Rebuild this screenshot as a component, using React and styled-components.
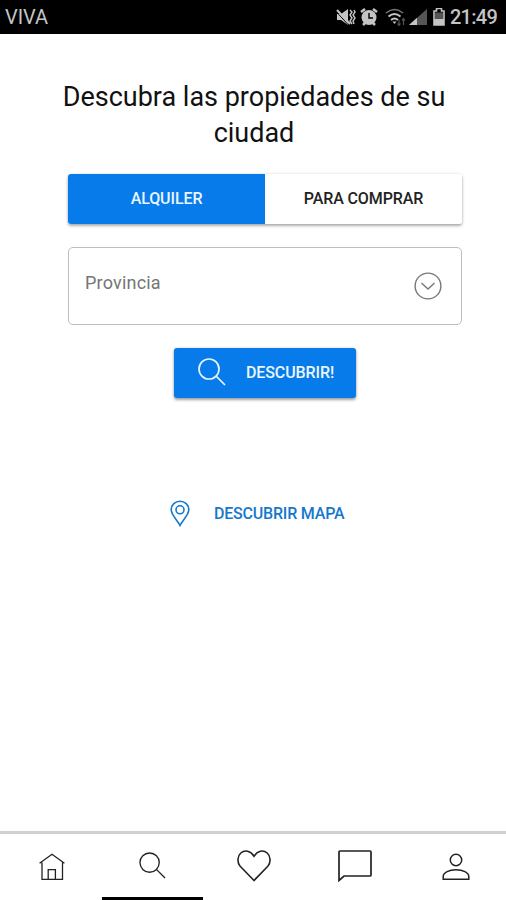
import React from 'react';
import styled, { createGlobalStyle, ThemeProvider } from 'styled-components';

const theme = {
    colors: {
        primary: '#077bea',
        link: '#1478cc',
        text: '#111',
        muted: '#757575',
        border: '#bdbdbd',
        status: '#c4c4c4',
    },
}

const GlobalStyle = createGlobalStyle`
    * {
        box-sizing: border-box;
    }
    body {
        margin: 0;
        background: #fff;
        font-family: Roboto, sans-serif;
    }
    svg {
        display: block;
        flex-shrink: 0;
    }
`

const Screen = styled.div`
    display: flex;
    flex-direction: column;
    width: 506px;
    height: 900px;
    overflow: hidden;
    background: #fff;
`

const StatusBar = styled.header`
    display: flex;
    align-items: center;
    justify-content: space-between;
    height: 34px;
    padding: 0 9px 0 5px;
    background: #000;
    color: ${({ theme }) => theme.colors.status};
`

const Carrier = styled.span`
    font-size: 20px;
    line-height: 34px;
    letter-spacing: -0.1px;
`

const StatusIcons = styled.div`
    display: flex;
    align-items: center;
`

const Clock = styled.span`
    margin-left: 5px;
    font-size: 20px;
    font-weight: 500;
    line-height: 34px;
    letter-spacing: -0.75px;
`

const Content = styled.main`
    display: flex;
    flex: 1;
    flex-direction: column;
    align-items: center;
    padding: 45px 44px 0 68px;
`

const Title = styled.h1`
    width: 394px;
    margin: 0 22px 0 0;
    font-size: 27px;
    font-weight: 400;
    line-height: 36px;
    text-align: center;
    color: ${({ theme }) => theme.colors.text};
`

const Segments = styled.div`
    display: flex;
    width: 394px;
    height: 50px;
    margin-top: 23px;
    border-radius: 3px;
    box-shadow: 0 2px 3px rgba(0, 0, 0, 0.3), 0 0 3px rgba(0, 0, 0, 0.12);
`

const Segment = styled.button`
    flex: 1;
    padding: 0 0 2px;
    border: 0;
    border-radius: ${props => props.$active ? '3px 0 0 3px' : '0 3px 3px 0'};
    background: ${props => props.$active ? props.theme.colors.primary : '#fff'};
    color: ${props => props.$active ? '#e9f6ff' : '#222'};
    font-family: inherit;
    font-size: 16px;
    font-weight: 500;
    letter-spacing: -0.1px;
`

const Select = styled.div`
    display: flex;
    align-items: center;
    justify-content: space-between;
    width: 394px;
    height: 78px;
    margin-top: 23px;
    padding: 0 19px 1px 16px;
    border: 1.5px solid ${({ theme }) => theme.colors.border};
    border-radius: 5px;
`

const Placeholder = styled.span`
    padding-bottom: 6px;
    font-size: 18px;
    letter-spacing: 0.2px;
    color: ${({ theme }) => theme.colors.muted};
`

const SubmitButton = styled.button`
    display: flex;
    align-items: center;
    width: 182px;
    height: 50px;
    margin-top: 23px;
    padding: 0 0 2px 24px;
    gap: 20px;
    border: 0;
    border-radius: 3px;
    background: ${({ theme }) => theme.colors.primary};
    box-shadow: 0 2px 3px rgba(0, 0, 0, 0.35), 0 0 3px rgba(0, 0, 0, 0.15);
    color: #e9f6ff;
    font-family: inherit;
    font-size: 16px;
    font-weight: 500;
    letter-spacing: -0.1px;
    white-space: nowrap;
`

const MapLink = styled.a`
    display: flex;
    align-items: center;
    width: 190px;
    height: 30px;
    margin-top: 100px;
    gap: 24px;
    font-size: 16px;
    font-weight: 500;
    letter-spacing: -0.2px;
    white-space: nowrap;
    color: ${({ theme }) => theme.colors.link};
`

const TabBar = styled.nav`
    display: flex;
    height: 69px;
    padding-left: 1px;
    border-top: 3px solid #d0d0d0;
`

const Tab = styled.a`
    display: flex;
    flex: 1;
    justify-content: center;
    padding-top: ${props => props.$top}px;
    border-bottom: 3px solid ${props => props.$active ? '#000' : 'transparent'};
    color: #222;
`

const Icon = ({ width, height, stroke = 1.4, children, ...rest }) => (
    <svg
        width={width}
        height={height}
        viewBox={`0 0 ${width} ${height}`}
        fill="none"
        stroke="currentColor"
        strokeWidth={stroke}
        {...rest}
    >
        {children}
    </svg>
)

const StatusIcon = styled(Icon)`
    margin-left: ${props => props.$left || 0}px;
`

const SearchIcon = (props) => (
    <Icon width={28} height={28} {...props}>
        <circle cx="11" cy="11" r="10" />
        <path d="M18 18l9 9" />
    </Icon>
)

const tabs = [
    {
        name: 'home',
        top: 19,
        icon: (
            <Icon width={26} height={28} stroke={1.3}>
                <path d="M.6 10.2L13 1.2l12.4 9M3 9.5v16.8h20.5V9.5M9.2 26V16.7h7.2V26" />
            </Icon>
        ),
    },
    {
        name: 'search',
        top: 18,
        active: true,
        icon: <SearchIcon width={27} height={27} stroke={1.4} viewBox="0 0 28 28" />,
    },
    {
        name: 'favorites',
        top: 16,
        icon: (
            <Icon width={34} height={32} stroke={1.6}>
                <path d="M17 30.5L3.2 16.2C-.2 12.4.4 6 3.8 3 8-.5 13.5.8 17 6.2 20.5.8 26-.5 30.2 3c3.4 3 4 9.4.6 13.2z" />
            </Icon>
        ),
    },
    {
        name: 'messages',
        top: 16,
        icon: (
            <Icon width={34} height={32} stroke={1.7}>
                <path d="M1 30.500V2q0-1 1-1h30q1 0 1 1v23q0 1-1 1H6z" />
            </Icon>
        ),
    },
    {
        name: 'profile',
        top: 19,
        icon: (
            <Icon width={28} height={28} stroke={1.5}>
                <circle cx="14" cy="7" r="5.7" />
                <path d="M1.2 26.2v-2.7c0-4 6-6.8 12.8-6.8s12.8 2.8 12.8 6.8v2.7z" />
            </Icon>
        ),
    },
]

export default function App() {
    return (
        <ThemeProvider theme={theme}>
            <GlobalStyle />
            <Screen>
                <StatusBar>
                    <Carrier>VIVA</Carrier>
                    <StatusIcons>
                        <StatusIcon width={20} height={18}>
                            <path d="M1 6h4l7-5v16l-7-5H1z" fill="currentColor" stroke="none" />
                            <path d="M0 3.500l13 14" stroke="#000" strokeWidth="1" />
                            <path d="M1 2l13 14" strokeWidth="2" />
                            <path d="M14 2l2 2-2 3 2 3-2 3 2 3M18 2l1 2-2 3 2 3-2 3 1 3" />
                        </StatusIcon>
                        <StatusIcon width={18} height={18} $left={4}>
                            <circle cx="9" cy="9.5" r="7.5" fill="currentColor" stroke="none" />
                            <path d="M1 4l4-3M17 4l-4-3M3 17l3-3M15 17l-3-3" strokeWidth="2.5" />
                            <path d="M9 5v5h4" stroke="#000" />
                        </StatusIcon>
                        <StatusIcon width={21} height={18} $left={7}>
                            <path d="M1 5q8.5-7 17 0" stroke="#777" strokeWidth="1.6" />
                            <path d="M3.5 8.5q6-5 12 0M6 12q3.5-3 7 0" strokeWidth="2" />
                            <path d="M7.5 13.5h4l-2 2.5z" fill="currentColor" stroke="none" />
                            <path d="M14 12v5M12.5 15.5l1.5 2 1.5-2M18.5 17v-6M17 12.5l1.5-2 1.5 2" stroke="#555" strokeWidth="1.2" />
                        </StatusIcon>
                        <StatusIcon width={18} height={18} $left={3}>
                            <path d="M0 17L18 1v16z" fill="#555" stroke="none" />
                            <path d="M0 17l8-7.2V17z" fill="currentColor" stroke="none" />
                        </StatusIcon>
                        <StatusIcon width={12} height={18} $left={6}>
                            <path d="M1 3h2.5V.5h5V3H11v14H1z" strokeWidth="1.6" />
                            <path d="M2 4.500h8V11H2z" fill="#555" stroke="none" />
                            <path d="M1 11h10v6H1z" fill="currentColor" stroke="none" />
                        </StatusIcon>
                        <Clock>21:49</Clock>
                    </StatusIcons>
                </StatusBar>
                <Content>
                    <Title>Descubra las propiedades de su ciudad</Title>
                    <Segments>
                        <Segment $active>ALQUILER</Segment>
                        <Segment>PARA COMPRAR</Segment>
                    </Segments>
                    <Select>
                        <Placeholder>Provincia</Placeholder>
                        <Icon width={28} height={28} stroke={1.4} color="#777">
                            <circle cx="14" cy="14" r="12.9" />
                            <path d="M7.500 11l6.500 6 6.500-6" />
                        </Icon>
                    </Select>
                    <SubmitButton>
                        <SearchIcon stroke={1.7} />
                        DESCUBRIR!
                    </SubmitButton>
                    <MapLink>
                        <Icon width={20} height={27} stroke={1.6}>
                            <path d="M10 25.5C7.5 20.5 1.2 15 1.2 9.5a8.8 8.3 0 0 1 17.6 0c0 5.5-6.3 11-8.8 16z" />
                            <circle cx="10" cy="9.8" r="4" />
                        </Icon>
                        DESCUBRIR MAPA
                    </MapLink>
                </Content>
                <TabBar>
                    {tabs.map(tab => (
                        <Tab key={tab.name} $top={tab.top} $active={tab.active}>
                            {tab.icon}
                        </Tab>
                    ))}
                </TabBar>
            </Screen>
        </ThemeProvider>
    )
}
